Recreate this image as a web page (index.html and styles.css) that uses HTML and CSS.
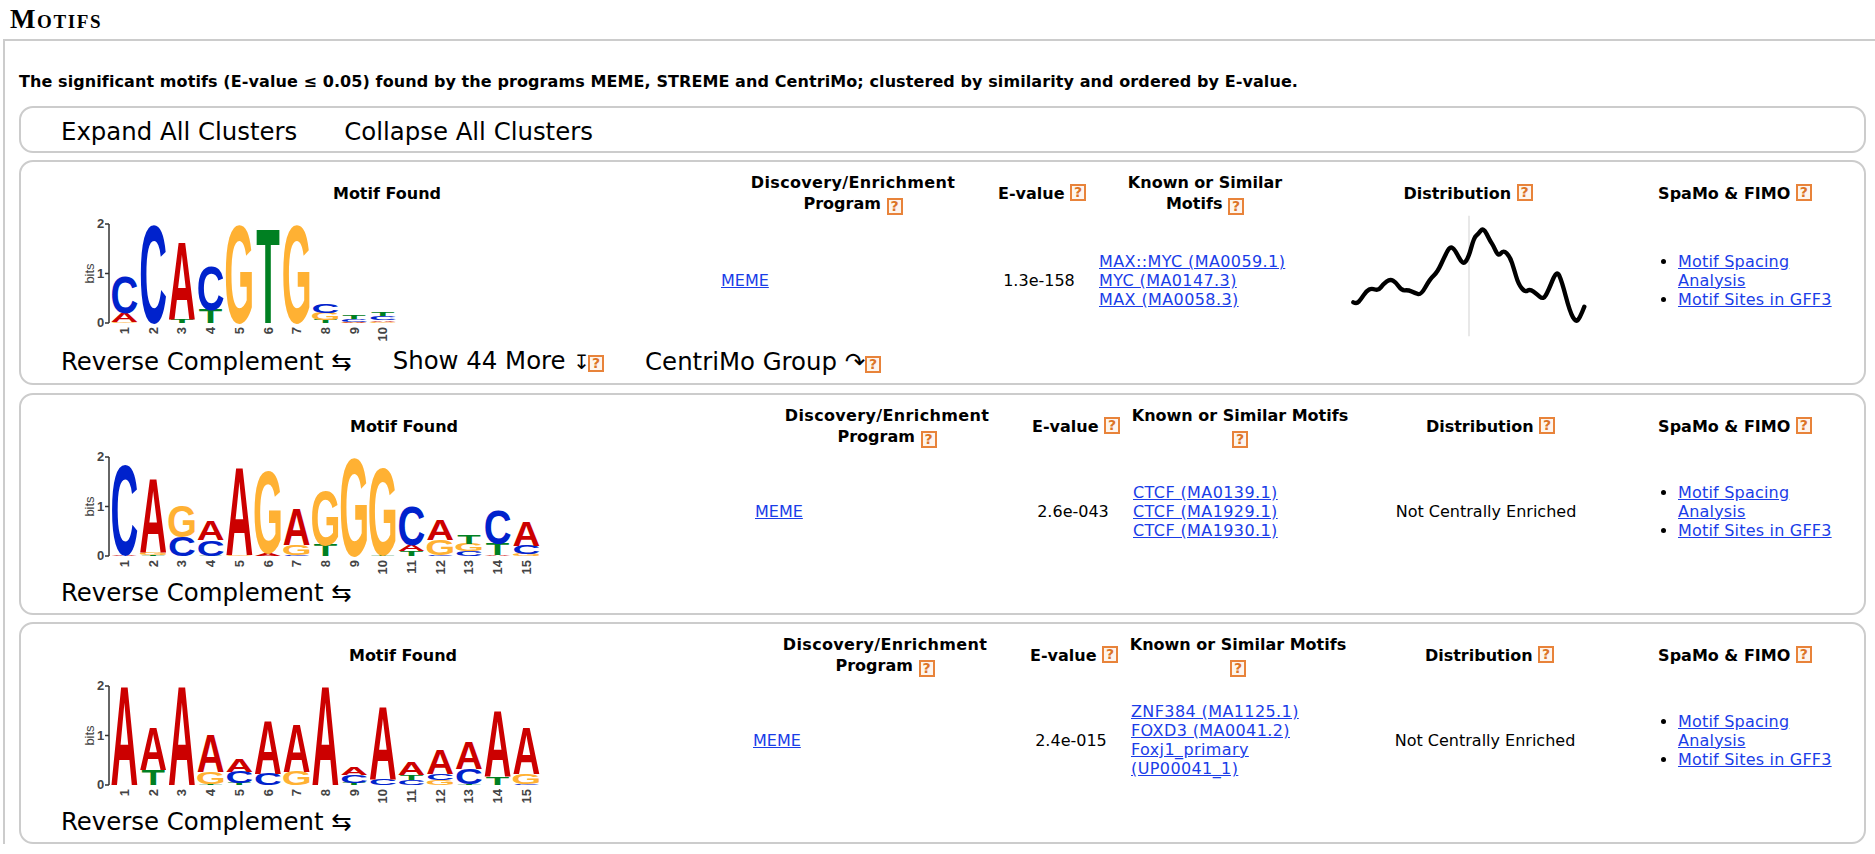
FILE: index.html
```html
<!DOCTYPE html>
<html lang="en">
<head>
    <meta charset="UTF-8">
    <meta name="viewport" content="width=device-width, initial-scale=1.0">
    <title>Motifs</title>
    <link rel="stylesheet" href="styles.css">
</head>
<body>
    <h2 class="title">Motifs</h2>
    <div class="outer">
        <p class="intro">The significant motifs (E-value &le; 0.05) found by the programs MEME, STREME and CentriMo; clustered by similarity and ordered by E-value.</p>

        <div class="box expand-bar">
            <span class="action">Expand All Clusters</span>
            <span class="action">Collapse All Clusters</span>
        </div>

        <div class="box cluster first">
            <div class="row cols-a">
                <div class="head">Motif Found</div>
                <div class="head"><span class="disc">Discovery/Enrichment</span><br>Program <span class="help">?</span></div>
                <div class="head">E-value <span class="help raised">?</span></div>
                <div class="head">Known or Similar<br>Motifs <span class="help">?</span></div>
                <div class="head">Distribution <span class="help raised">?</span></div>
                <div class="head">SpaMo &amp; FIMO <span class="help raised">?</span></div>

                <div class="logo-cell"><svg class="logo" data-motif="0" width="480" height="130"></svg></div>
                <div class="cell"><a href="#">MEME</a></div>
                <div class="cell evalue">1.3e-158</div>
                <div class="cell links">
                    <a href="#">MAX::MYC (MA0059.1)</a>
                    <a href="#">MYC (MA0147.3)</a>
                    <a href="#">MAX (MA0058.3)</a>
                </div>
                <div class="cell dist">
                    <svg class="dist-plot" viewBox="0 0 780 420" width="260" height="140">
                        <line x1="387" y1="20" x2="387" y2="382" stroke="#ddd" stroke-width="4"/>
                        <path class="dist-line" fill="none" stroke="#000" stroke-width="13" stroke-linejoin="round" stroke-linecap="round" data-points="40,280 50,285 62,272 80,245 95,238 115,245 130,225 150,210 168,220 185,245 205,243 225,252 243,258 270,210 292,190 315,140 330,112 345,122 368,168 385,148 402,85 415,75 430,55 450,95 460,110 475,143 490,123 510,143 522,180 535,225 555,250 570,240 590,255 610,272 625,245 650,183 665,215 690,310 708,340 720,325 733,293"/>
                    </svg>
                </div>
                <div class="cell">
                    <ul class="spamo">
                        <li><a href="#">Motif Spacing Analysis</a></li>
                        <li><a href="#">Motif Sites in GFF3</a></li>
                    </ul>
                </div>
            </div>
            <div class="actions">
                <span class="action">Reverse Complement &#8646;</span>
                <span class="action">Show 44 More <span class="arrow-down">&#8615;</span><span class="help action-help tight">?</span></span>
                <span class="action">CentriMo Group &#8631;<span class="help action-help">?</span></span>
            </div>
        </div>

        <div class="box cluster">
            <div class="row cols-b">
                <div class="head">Motif Found</div>
                <div class="head"><span class="disc">Discovery/Enrichment</span><br>Program <span class="help">?</span></div>
                <div class="head">E-value <span class="help raised">?</span></div>
                <div class="head known">Known or Similar Motifs<br><span class="help">?</span></div>
                <div class="head shifted">Distribution <span class="help raised">?</span></div>
                <div class="head">SpaMo &amp; FIMO <span class="help raised">?</span></div>

                <div class="logo-cell"><svg class="logo" data-motif="1" width="480" height="130"></svg></div>
                <div class="cell"><a href="#">MEME</a></div>
                <div class="cell evalue">2.6e-043</div>
                <div class="cell links">
                    <a href="#">CTCF (MA0139.1)</a>
                    <a href="#">CTCF (MA1929.1)</a>
                    <a href="#">CTCF (MA1930.1)</a>
                </div>
                <div class="cell dist">Not Centrally Enriched</div>
                <div class="cell">
                    <ul class="spamo">
                        <li><a href="#">Motif Spacing Analysis</a></li>
                        <li><a href="#">Motif Sites in GFF3</a></li>
                    </ul>
                </div>
            </div>
            <div class="actions">
                <span class="action">Reverse Complement &#8646;</span>
            </div>
        </div>

        <div class="box cluster">
            <div class="row cols-c">
                <div class="head">Motif Found</div>
                <div class="head"><span class="disc">Discovery/Enrichment</span><br>Program <span class="help">?</span></div>
                <div class="head">E-value <span class="help raised">?</span></div>
                <div class="head known">Known or Similar Motifs<br><span class="help">?</span></div>
                <div class="head shifted">Distribution <span class="help raised">?</span></div>
                <div class="head">SpaMo &amp; FIMO <span class="help raised">?</span></div>

                <div class="logo-cell"><svg class="logo" data-motif="2" width="480" height="130"></svg></div>
                <div class="cell"><a href="#">MEME</a></div>
                <div class="cell evalue">2.4e-015</div>
                <div class="cell links">
                    <a href="#">ZNF384 (MA1125.1)</a>
                    <a href="#">FOXD3 (MA0041.2)</a>
                    <a href="#">Foxj1_primary (UP00041_1)</a>
                </div>
                <div class="cell dist">Not Centrally Enriched</div>
                <div class="cell">
                    <ul class="spamo">
                        <li><a href="#">Motif Spacing Analysis</a></li>
                        <li><a href="#">Motif Sites in GFF3</a></li>
                    </ul>
                </div>
            </div>
            <div class="actions">
                <span class="action">Reverse Complement &#8646;</span>
            </div>
        </div>
    </div>

    <script src="logos.js"></script>
</body>
</html>
```

FILE: styles.css
```css
body, html {
    margin: 0;
    padding: 0;
    background-color: #fff;
    overflow: hidden;
    font-family: "DejaVu Sans", Verdana, sans-serif;
    font-size: 16px;
    color: #000;
}
a {
    color: #1a3de8;
}
.title {
    margin: 0;
    height: 39px;
    padding: 5px 0 0 10px;
    box-sizing: border-box;
    font-family: "Liberation Serif", serif;
    font-size: 27px;
    line-height: 28px;
    letter-spacing: 1.6px;
    font-variant: small-caps;
}
.outer {
    margin-left: 3px;
    padding: 0 9px 0 14px;
    border-top: 2px solid #ccc;
    border-left: 2px solid #ccc;
}
.intro {
    margin: 0;
    padding-top: 32px;
    height: 65px;
    box-sizing: border-box;
    font-size: 16px;
    line-height: 18px;
    letter-spacing: .09px;
    font-weight: bold;
    white-space: nowrap;
}
.box {
    border: 2px solid #ccc;
    border-radius: 14px;
    box-sizing: border-box;
}
.expand-bar {
    height: 47px;
    margin-bottom: 7px;
    padding: 4px 0 0 40px;
    display: flex;
    align-items: center;
    gap: 47px;
}
.action {
    font-size: 24.4px;
    line-height: 30px;
    white-space: nowrap;
}
.cluster {
    margin-bottom: 7px;
    padding: 10px 0 6px 32px;
}
.cluster.first {
    margin-bottom: 8px;
    padding-bottom: 7px;
}
.row {
    display: grid;
    grid-template-rows: 42px 130px;
}
.cols-a {
    grid-template-columns: 668px 264px 114px 212px 314px 220px;
}
.cols-b {
    grid-template-columns: 702px 264px 114px 214px 278px 220px;
}
.cols-c {
    grid-template-columns: 700px 264px 114px 214px 280px 220px;
}
.head {
    font-weight: bold;
    font-size: 16px;
    line-height: 21px;
    text-align: center;
    align-self: center;
}
.head.shifted {
    padding-left: 9px;
}
.head.known {
    margin: 0 -4px;
}
.disc {
    letter-spacing: .35px;
}
.cell {
    font-size: 16px;
    line-height: 19px;
    align-self: center;
    padding-bottom: 2px;
}
.first .cell {
    padding: 2px 0 0;
}
.evalue {
    text-align: center;
    padding-right: 6px;
}
.first .evalue {
    padding-right: 6px;
}
.links a {
    display: block;
    letter-spacing: .4px;
}
.dist {
    text-align: center;
}
.first .dist {
    padding-top: 0;
}
.dist-plot {
    display: block;
    margin-left: 29px;
}
.logo {
    display: block;
    margin-left: 27px;
}
.logo text {
    font-family: "Liberation Sans", Arial, sans-serif;
}
.logo .letter {
    font-size: 100px;
    font-weight: bold;
    text-anchor: middle;
}
.logo .axis-label {
    font-size: 13px;
    fill: #444;
}
.logo .axis-number {
    font-size: 13px;
    font-weight: bold;
    fill: #444;
}
.spamo {
    margin: 0;
    padding: 0 0 0 53px;
    letter-spacing: .2px;
}
.actions {
    display: flex;
    gap: 41px;
    padding: 2px 0 0 8px;
    height: 30px;
    box-sizing: border-box;
    align-items: center;
}
.first .actions {
    height: 32px;
    padding-top: 3px;
}
.arrow-down {
    font-size: 20px;
}
.help {
    display: inline-block;
    width: 16px;
    height: 17px;
    box-sizing: border-box;
    border: 2px solid #e8833a;
    background-color: #fdf5ee;
    color: #dc7426;
    font-family: "DejaVu Sans", sans-serif;
    font-size: 14px;
    font-weight: bold;
    line-height: 13px;
    letter-spacing: 0;
    text-align: center;
    vertical-align: -2px;
}
.help.raised {
    vertical-align: 2px;
}
.help.action-help {
    vertical-align: 1px;
}
.help.tight {
    margin-left: -2px;
}
```

FILE: logos.js
```js
// letter heights in bits, bottom of the stack first
var MOTIFS = [
    [
        [["G", .03], ["A", .17], ["C", .73]],
        [["C", 1.94]],
        [["T", .07], ["A", 1.55]],
        [["T", .27], ["C", .87]],
        [["G", 1.94]],
        [["T", 1.89]],
        [["G", 1.94]],
        [["T", .07], ["G", .14], ["C", .17]],
        [["G", .01], ["A", .02], ["C", .06], ["T", .07]],
        [["G", .03], ["A", .03], ["C", .08], ["T", .07]]
    ],
    [
        [["A", .02], ["C", 1.78]],
        [["T", .02], ["G", .04], ["A", 1.48]],
        [["C", .38], ["G", .62]],
        [["T", .01], ["C", .32], ["A", .38]],
        [["G", .02], ["A", 1.76]],
        [["A", .06], ["G", 1.62]],
        [["C", .02], ["G", .2], ["A", .72]],
        [["T", .22], ["G", 1.09]],
        [["G", 1.95]],
        [["T", .02], ["G", 1.74]],
        [["T", .1], ["A", .12], ["C", .78]],
        [["C", .02], ["G", .3], ["A", .4]],
        [["C", .1], ["G", .15], ["T", .17]],
        [["A", .02], ["T", .22], ["C", .67]],
        [["G", .04], ["C", .17], ["A", .49]]
    ],
    [
        [["A", 1.96]],
        [["T", .31], ["A", .85]],
        [["A", 1.96]],
        [["T", .03], ["G", .24], ["A", .75]],
        [["T", .05], ["C", .22], ["A", .25]],
        [["C", .23], ["A", 1.07]],
        [["G", .27], ["A", .95]],
        [["A", 1.96]],
        [["T", .05], ["C", .15], ["A", .15]],
        [["C", .12], ["A", 1.45]],
        [["C", .1], ["T", .1], ["A", .25]],
        [["G", .1], ["C", .12], ["A", .48]],
        [["T", .03], ["C", .3], ["A", .53]],
        [["T", .16], ["A", 1.32]],
        [["C", .02], ["G", .21], ["A", .93]]
    ]
];

var COLOURS = { A: "#cc0000", C: "#0022cc", G: "#ffb133", T: "#008022" };
var SVG_NS = "http://www.w3.org/2000/svg";
var AXIS_X = 29, BASELINE = 109, BIT = 49.5, FIRST_COL = 44.5, COL_WIDTH = 28.7;

function addNode(svg, name, attrs, text) {
    var node = document.createElementNS(SVG_NS, name);
    for (var key in attrs) {
        node.setAttribute(key, attrs[key]);
    }
    if (text !== undefined) {
        node.textContent = text;
    }
    svg.appendChild(node);
}

function drawAxis(svg) {
    var stroke = { stroke: "#333", "stroke-width": 1.5 };
    addNode(svg, "line", Object.assign({ x1: AXIS_X, y1: BASELINE - 2 * BIT, x2: AXIS_X, y2: BASELINE }, stroke));
    for (var i = 0; i <= 2; i++) {
        var y = BASELINE - i * BIT;
        addNode(svg, "line", Object.assign({ x1: AXIS_X - 4, y1: y, x2: AXIS_X, y2: y }, stroke));
        addNode(svg, "text", { "class": "axis-number", x: AXIS_X - 12, y: y + 4 }, i);
    }
    addNode(svg, "text", { "class": "axis-label", transform: "translate(" + (AXIS_X - 15) + "," + (BASELINE - BIT) + ") rotate(-90)", "text-anchor": "middle" }, "bits");
}

function drawLogo(svg, columns) {
    drawAxis(svg);
    columns.forEach(function(stack, col) {
        var x = FIRST_COL + col * COL_WIDTH;
        var y = BASELINE;
        stack.forEach(function(item) {
            var height = item[1] * BIT;
            addNode(svg, "text", {
                "class": "letter",
                fill: COLOURS[item[0]],
                transform: "translate(" + x + "," + y + ") scale(.385," + (height / 69).toFixed(4) + ")"
            }, item[0]);
            y -= height;
        });
        addNode(svg, "text", {
            "class": "axis-number",
            transform: "translate(" + (x + 4.5) + "," + (BASELINE + 4) + ") rotate(-90)",
            "text-anchor": "end"
        }, col + 1);
    });
}

// round the distribution curve off through the midpoints of its samples
function smoothPath(pathEl) {
    var pts = pathEl.getAttribute("data-points").split(" ").map(function(p) {
        return p.split(",").map(Number);
    });
    var d = "M" + pts[0].join(",");
    for (var i = 1; i < pts.length - 1; i++) {
        var midX = (pts[i][0] + pts[i + 1][0]) / 2;
        var midY = (pts[i][1] + pts[i + 1][1]) / 2;
        d += " Q" + pts[i].join(",") + " " + midX + "," + midY;
    }
    d += " L" + pts[pts.length - 1].join(",");
    pathEl.setAttribute("d", d);
}

document.querySelectorAll(".logo").forEach(function(svg) {
    drawLogo(svg, MOTIFS[svg.getAttribute("data-motif")]);
});
document.querySelectorAll(".dist-line").forEach(smoothPath);
```
